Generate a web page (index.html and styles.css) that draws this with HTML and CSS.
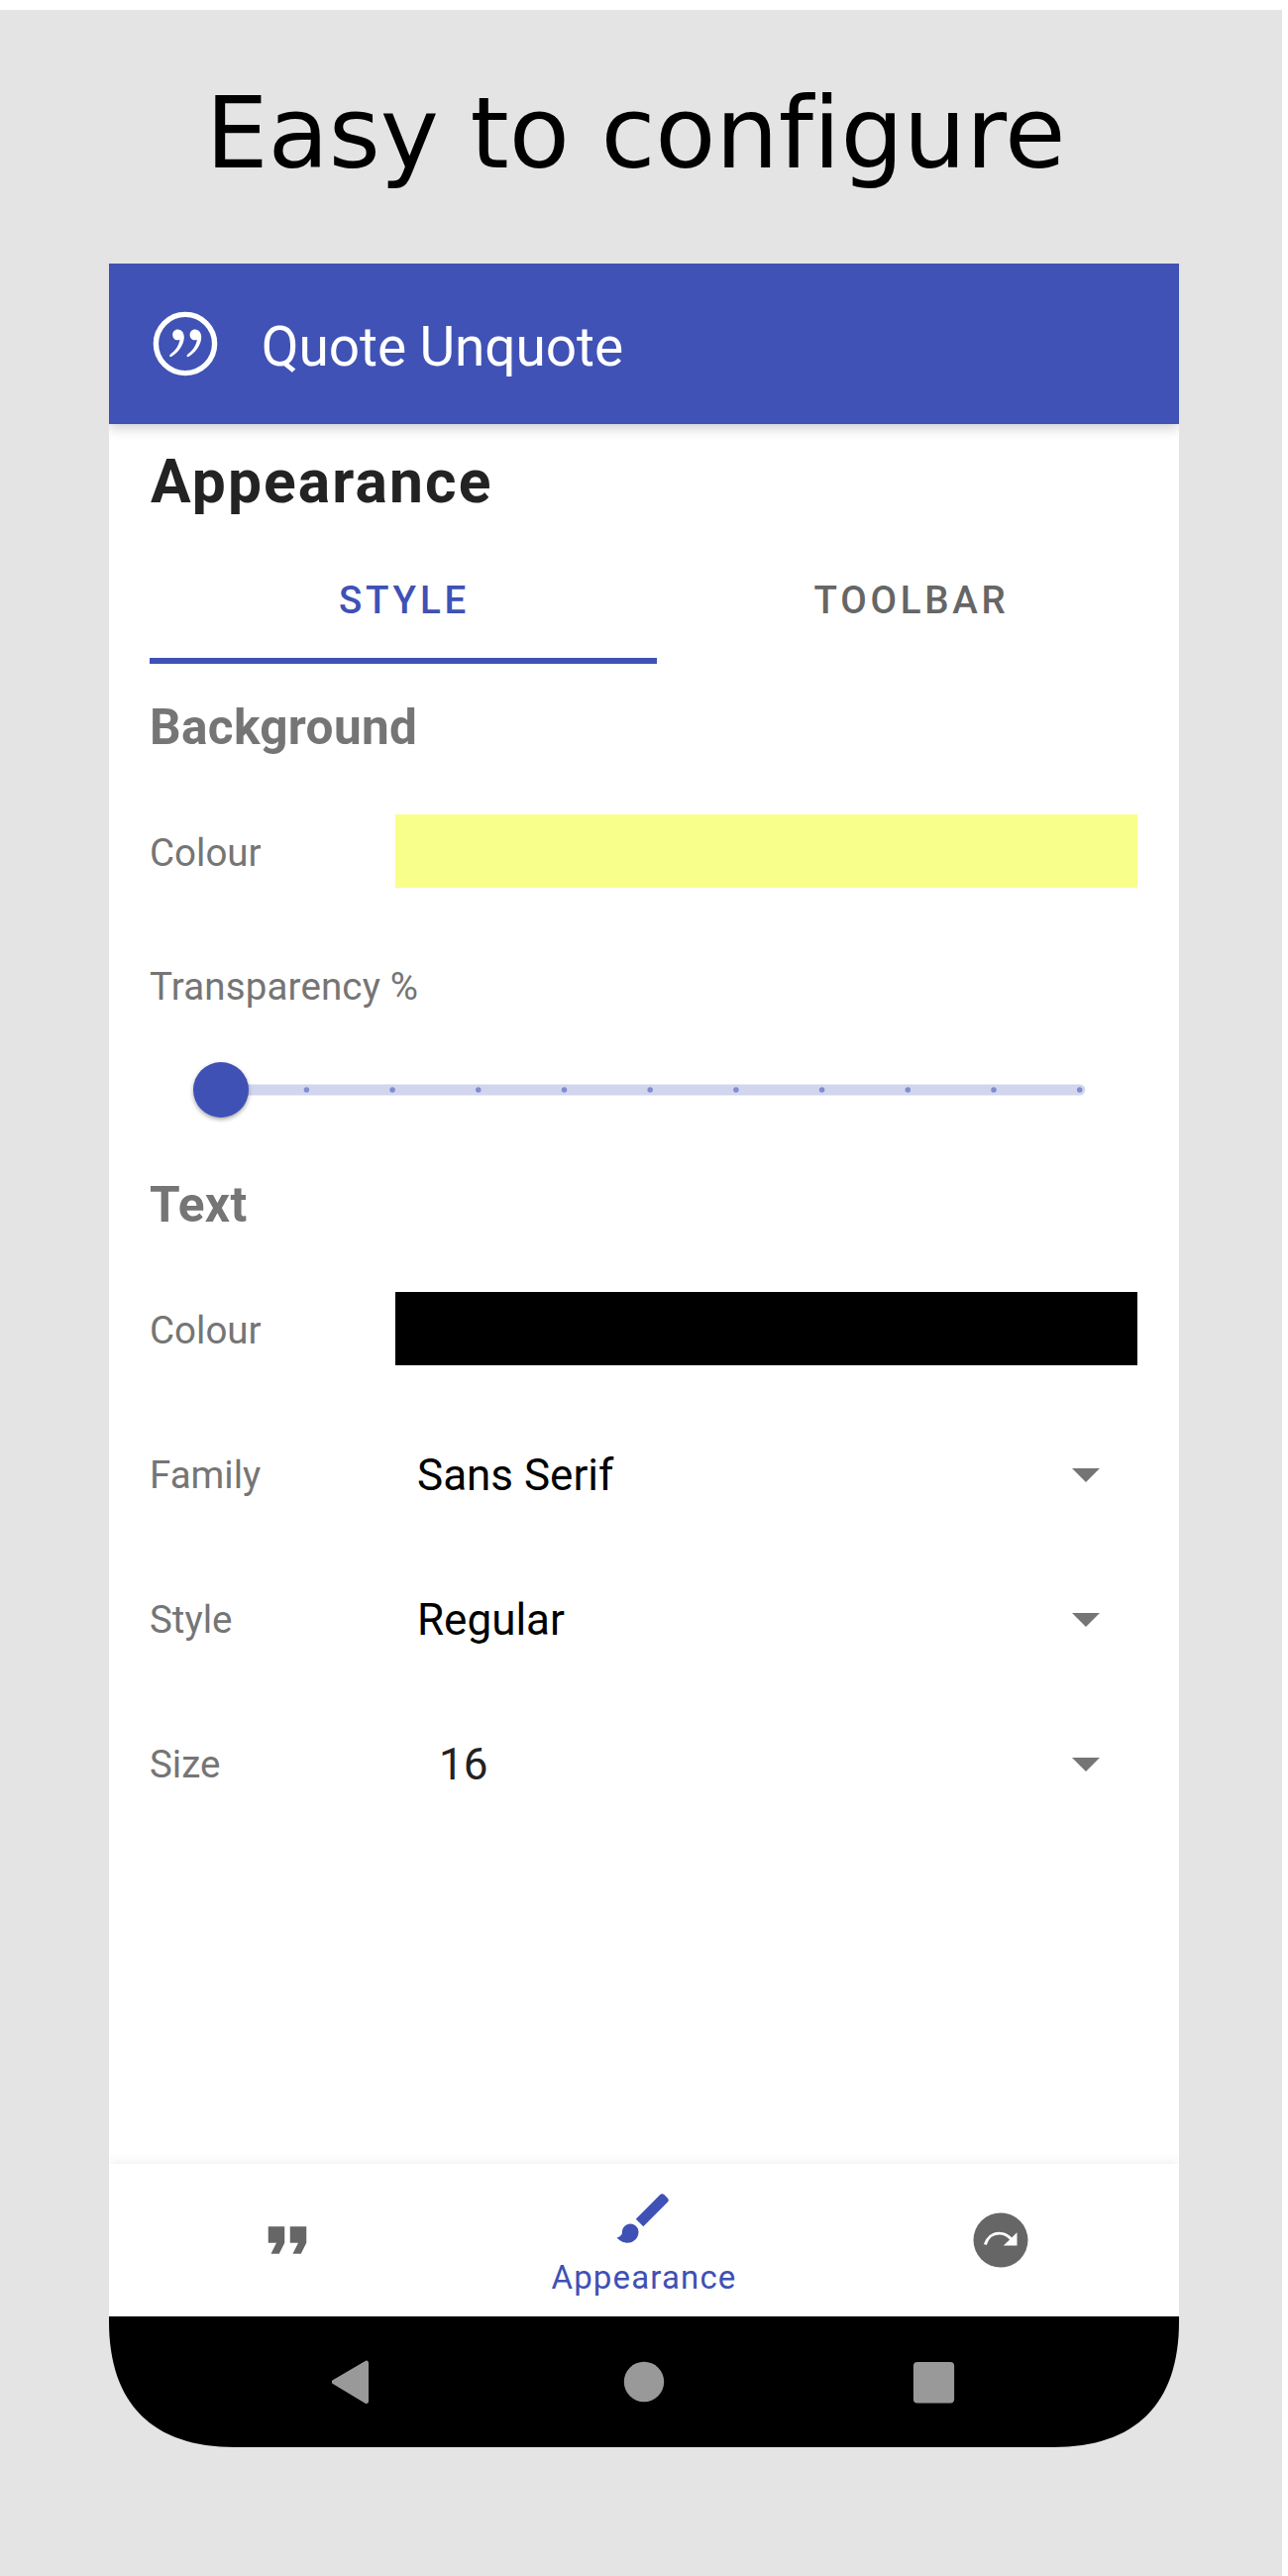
FILE: index.html
```html
<!DOCTYPE html>
<html lang="en">
<head>
<meta charset="utf-8">
<title>Quote Unquote</title>
<link rel="stylesheet" href="styles.css">
</head>
<body>
<main class="stage">
  <h1 class="headline">Easy to configure</h1>
  <section class="phone">
    <header class="app-bar">
      <svg class="app-logo" viewBox="0 0 66 66">
        <circle cx="33" cy="33" r="29.6" fill="none" stroke="#fff" stroke-width="5.4"/>
        <g fill="#fff">
          <path id="mark" d="M25.3 18.6C29 18.6 31.8 21.5 31.8 26.5C31.8 34 26 41.7 19 46C17.7 46.6 16.4 45.2 17.6 44C23 39.8 26.5 35.3 27.5 28.8C26.8 29.2 26 29.3 25.3 29.3C22.3 29.3 20.2 27 20.2 24C20.2 21 22.4 18.6 25.3 18.6Z"/>
          <use href="#mark" x="17.4"/>
        </g>
      </svg>
      <span class="app-name">Quote Unquote</span>
    </header>

    <div class="content">
      <h2 class="page-title">Appearance</h2>
      <nav class="tabs">
        <a class="tab tab-active">STYLE</a>
        <a class="tab">TOOLBAR</a>
      </nav>

      <h3 class="section-title">Background</h3>
      <div class="row">
        <span class="label">Colour</span>
        <span class="swatch swatch-yellow"></span>
      </div>
      <div class="label slider-label">Transparency %</div>
      <svg class="slider" viewBox="0 0 997 60">
        <rect x="66" y="24.5" width="878.3" height="11" rx="5.5" fill="#d1d5ee"/>
        <line x1="158.4" y1="30" x2="939" y2="30" stroke="#828dcf" stroke-width="5.5" stroke-linecap="round" stroke-dasharray="0 86.7"/>
        <circle class="thumb" cx="72" cy="30" r="28" fill="#3f51b5"/>
      </svg>

      <h3 class="section-title section-text">Text</h3>
      <div class="row">
        <span class="label">Colour</span>
        <span class="swatch swatch-black"></span>
      </div>
      <div class="selects">
        <div class="select-row">
          <span class="label">Family</span>
          <span class="value">Sans Serif</span>
          <svg class="caret" viewBox="0 0 28 14"><path d="M0 0H28L14 14Z" fill="#757575"/></svg>
        </div>
        <div class="select-row">
          <span class="label">Style</span>
          <span class="value">Regular</span>
          <svg class="caret" viewBox="0 0 28 14"><path d="M0 0H28L14 14Z" fill="#757575"/></svg>
        </div>
        <div class="select-row">
          <span class="label">Size</span>
          <span class="value value-size">16</span>
          <svg class="caret" viewBox="0 0 28 14"><path d="M0 0H28L14 14Z" fill="#757575"/></svg>
        </div>
      </div>
    </div>

    <nav class="bottom-nav">
      <a class="nav-item">
        <svg class="nav-icon" viewBox="0 0 24 24"><path fill="#666" d="M6 17h3l2-4V7H5v6h3zm8 0h3l2-4V7h-6v6h3z"/></svg>
      </a>
      <a class="nav-item nav-active">
        <svg class="nav-icon" viewBox="0 0 24 24"><path fill="#3f51b5" d="M7 14c-1.66 0-3 1.34-3 3 0 1.31-1.16 2-2 2 .92 1.22 2.49 2 4 2 2.21 0 4-1.79 4-4 0-1.66-1.34-3-3-3zm13.71-9.37l-1.34-1.34c-.39-.39-1.02-.39-1.41 0L9 12.25 11.75 15l8.96-8.96c.39-.39.39-1.02 0-1.41z"/></svg>
        <span class="nav-label">Appearance</span>
      </a>
      <a class="nav-item">
        <svg class="nav-icon" viewBox="0 0 66 66">
          <circle cx="33" cy="33" r="27.5" fill="#666"/>
          <path d="M17.3 37.5C19.5 30.4 25 26.1 31.5 26.1C36.4 26.1 40.6 28.3 43.6 32.2" fill="none" stroke="#fff" stroke-width="2.9"/>
          <path d="M49.5 25.2V38.6H35.8Z" fill="#fff"/>
        </svg>
      </a>
    </nav>

    <div class="system-bar">
      <svg class="key" viewBox="0 0 46 46"><path d="M2 22.2L34.8 2.8V41.8Z" fill="#999" stroke="#999" stroke-width="4.4" stroke-linejoin="round"/></svg>
      <svg class="key" viewBox="0 0 46 46"><circle cx="23" cy="22" r="20.2" fill="#999"/></svg>
      <svg class="key" viewBox="0 0 46 46"><rect x="2.9" y="2" width="41.2" height="41.4" rx="4" fill="#999"/></svg>
    </div>
  </section>
</main>
</body>
</html>
```
FILE: styles.css
```css
* { box-sizing: border-box; }

body {
  margin: 0;
  padding-top: 10px;
  background: #fff;
  font-family: Roboto, "Noto Sans", sans-serif;
}

svg { display: block; flex: none; }

.stage {
  width: 1294px;
  height: 2590px;
  background: #e4e4e4;
}

.headline {
  margin: 0;
  height: 256px;
  padding: 67px 0 0 207.5px;
  font: 400 100px/116px "DejaVu Sans", sans-serif;
  font-variant-ligatures: none;
  letter-spacing: -.1px;
  color: #000;
  white-space: nowrap;
}

.phone {
  display: flex;
  flex-direction: column;
  width: 1080px;
  height: 2204px;
  margin-left: 110px;
}

.app-bar {
  display: flex;
  align-items: center;
  height: 162px;
  padding-left: 44px;
  background: #4052b5;
  box-shadow: 0 4px 12px rgba(0, 0, 0, .2);
  clip-path: inset(0 0 -24px 0);
  z-index: 1;
}

.app-logo { width: 66px; height: 66px; }

.app-name {
  margin-left: 43.8px;
  padding-top: 5px;
  font-size: 55px;
  line-height: 64px;
  letter-spacing: -.1px;
  color: #fff;
}

.content {
  flex: 1;
  padding: 23px 42px 0 41px;
  background: #fff;
}

.page-title {
  margin: 0 0 15px;
  padding-left: 1px;
  font-size: 60.5px;
  line-height: 72px;
  letter-spacing: 2.1px;
  color: #232323;
}

.tabs {
  display: grid;
  grid-template-columns: 512px 1fr;
  width: 1024px;
  height: 132px;
}

.tab {
  display: flex;
  align-items: center;
  justify-content: center;
  padding: 2px 0 0 2px;
  font-size: 38.5px;
  font-weight: 500;
  letter-spacing: 3.75px;
  color: #666;
}

.tab-active {
  padding-top: 8px;
  color: #3f51b5;
  border-bottom: 6px solid #3f51b5;
}

.section-title {
  margin: 34px 0 58px;
  font-size: 49.5px;
  line-height: 60px;
  letter-spacing: .35px;
  color: #757575;
}

.section-text { margin-top: 56px; }

.row {
  display: grid;
  grid-template-columns: 248px 1fr;
  height: 74px;
}

.label {
  align-self: center;
  font-size: 38.5px;
  line-height: 46px;
  color: #757575;
}

.row .label { padding-top: 4px; }

.swatch-yellow { background: #f9ff8b; }
.swatch-black { background: #000; }

.slider-label {
  margin-top: 77px;
  letter-spacing: .15px;
}

.slider {
  width: 997px;
  height: 60px;
  margin-top: 51px;
  overflow: visible;
}

.thumb { filter: drop-shadow(0 2px 2px rgba(0, 0, 0, .35)); }

.selects { margin-top: 38px; }

.select-row {
  display: grid;
  grid-template-columns: 270px 1fr 28px;
  align-items: center;
  height: 146px;
  padding-right: 38px;
}

.value {
  font-size: 44px;
  line-height: 52px;
  color: #000;
}

.value-size {
  padding-left: 22px;
  color: #212121;
}

.caret { width: 28px; height: 14px; margin-bottom: 1px; }

.bottom-nav {
  display: grid;
  grid-template-columns: repeat(3, 1fr);
  height: 154px;
  background: #fff;
  box-shadow: 0 -1px 10px rgba(0, 0, 0, .08);
  clip-path: inset(-24px 0 0 0);
}

.nav-item {
  display: flex;
  flex-direction: column;
  align-items: center;
  justify-content: center;
}

.nav-active {
  justify-content: flex-start;
  padding-top: 21.5px;
}

.nav-icon { width: 66px; height: 66px; }

.nav-label {
  margin-top: 7px;
  font-size: 33px;
  line-height: 40px;
  letter-spacing: 1.15px;
  color: #3f51b5;
}

.system-bar {
  display: flex;
  justify-content: center;
  gap: 246px;
  height: 132px;
  padding-top: 44px;
  background: #000;
  clip-path: path("M0 0H1080V5C1080 88.2 1036.2 132 953 132H127C43.8 132 0 88.2 0 5Z");
}

.key { width: 46px; height: 46px; }
```
